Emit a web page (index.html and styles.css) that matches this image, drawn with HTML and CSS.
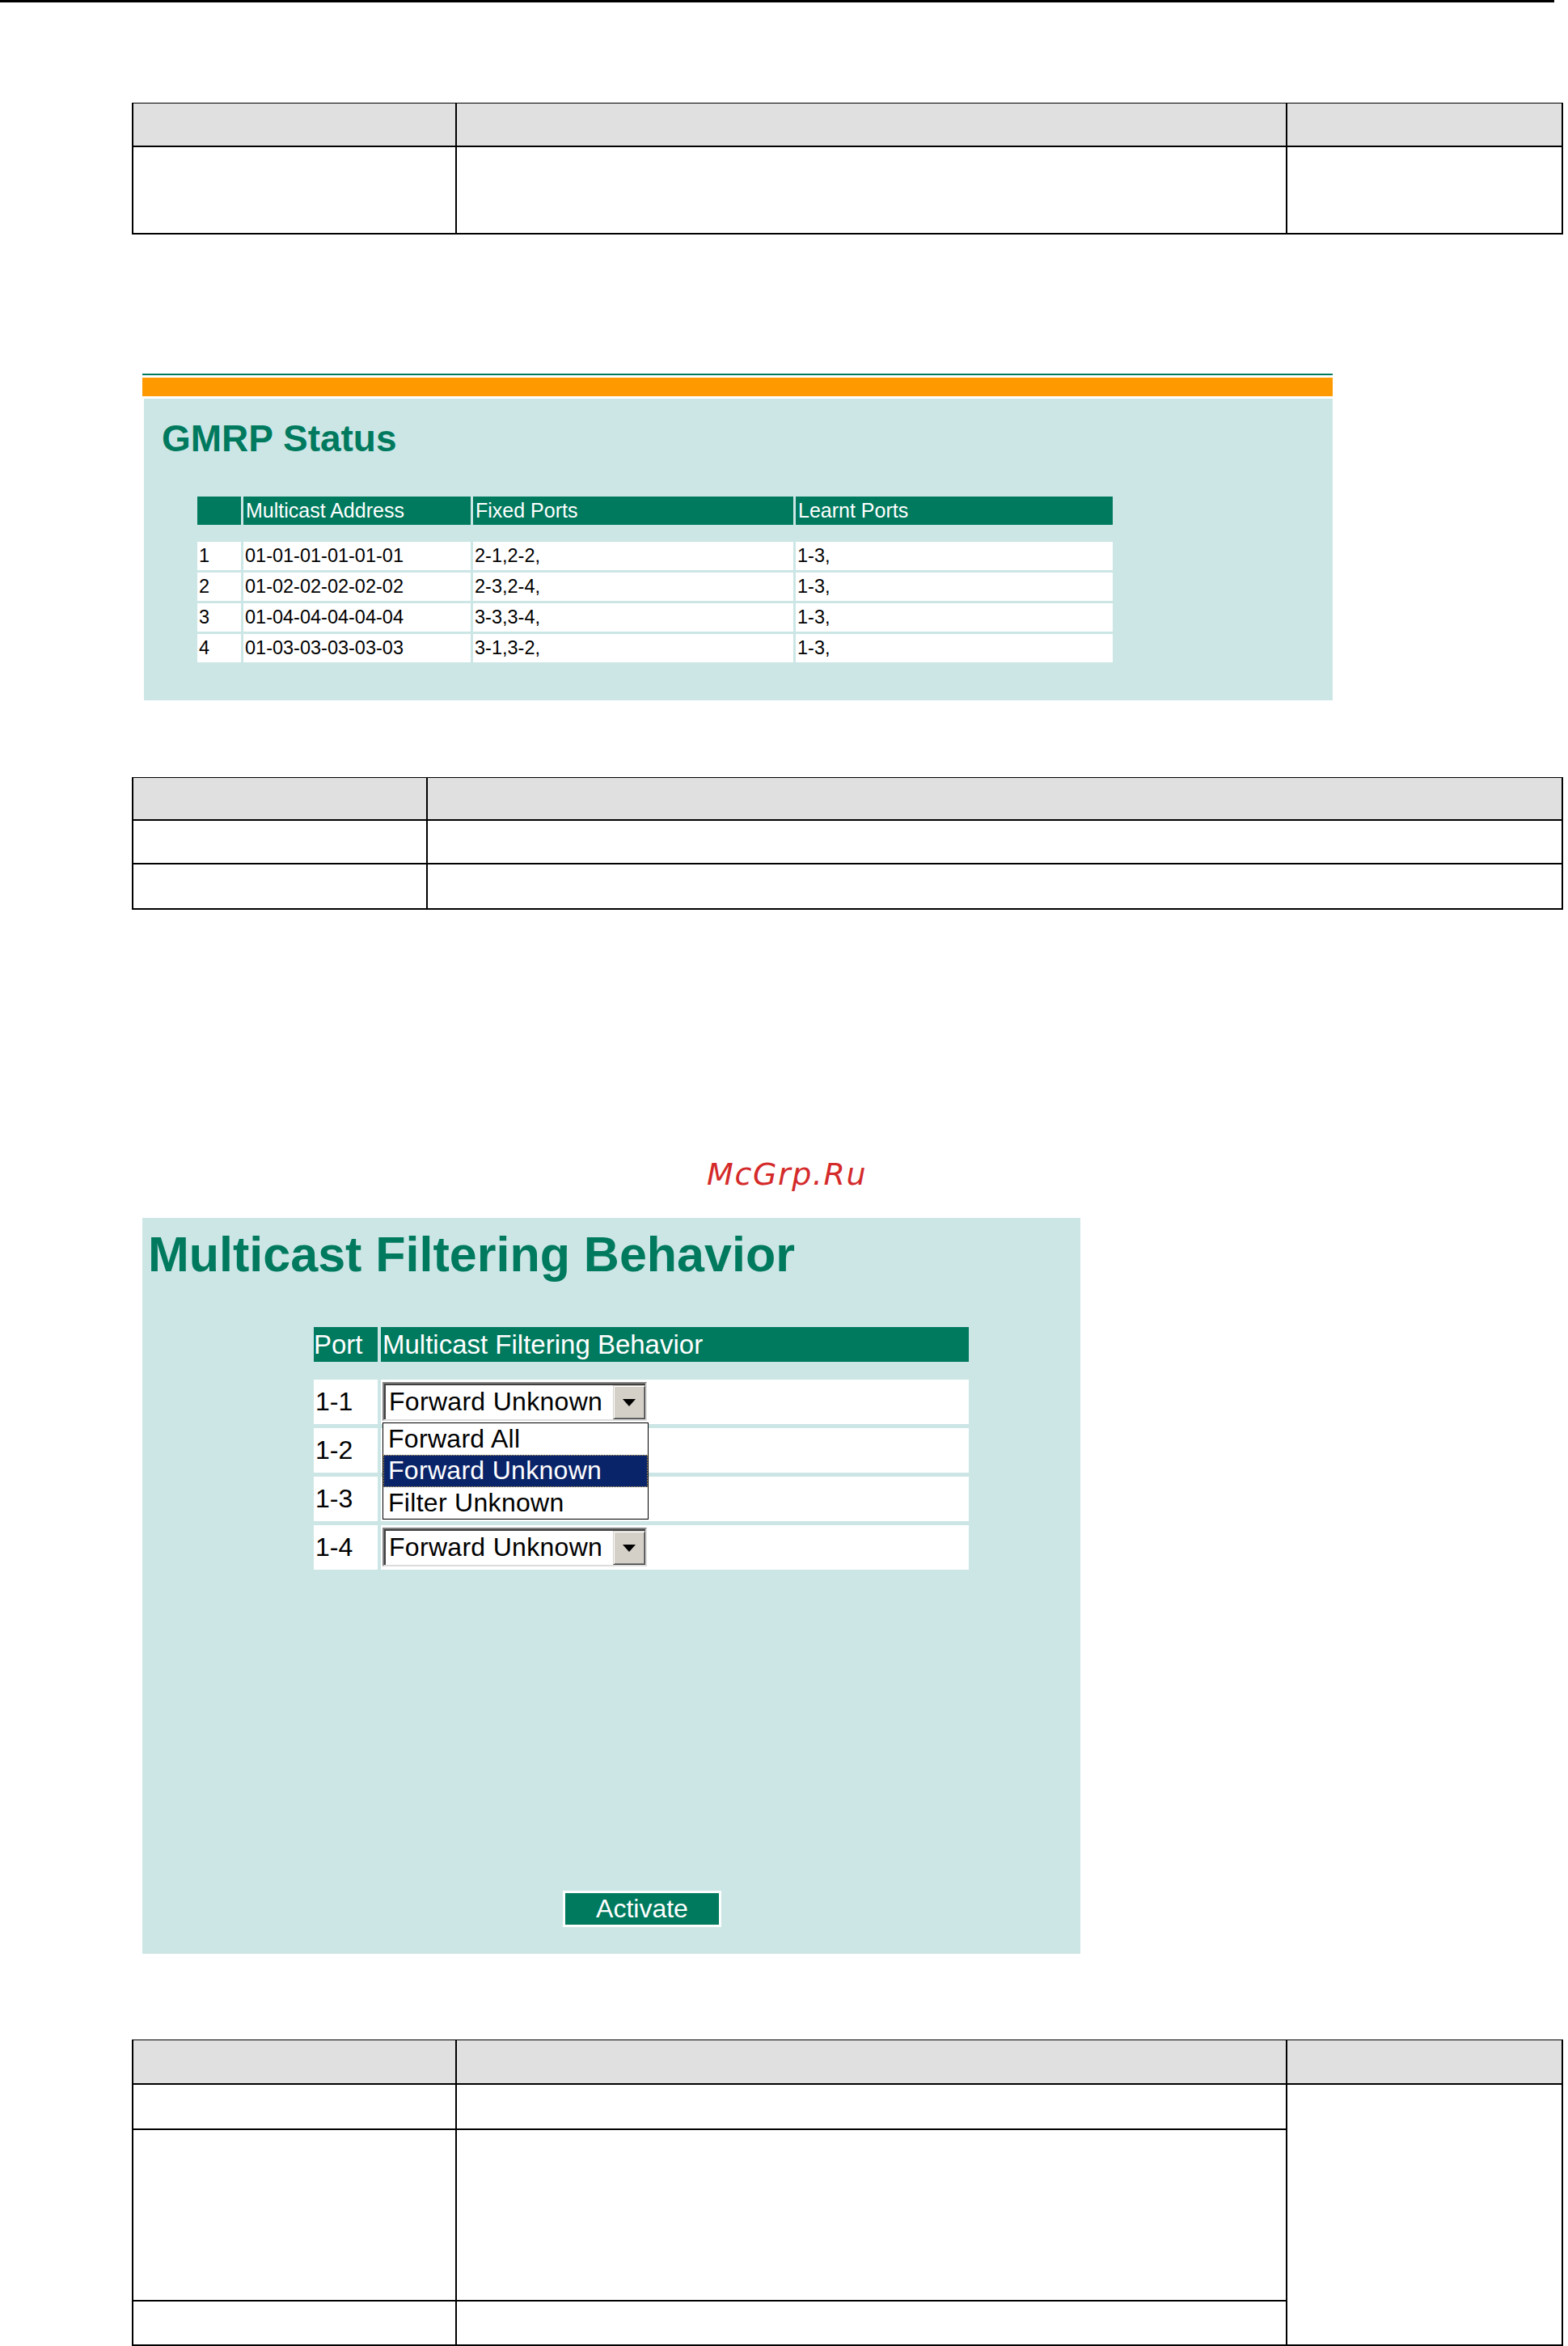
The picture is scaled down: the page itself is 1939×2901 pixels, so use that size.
FILE: index.html
```html
<!DOCTYPE html>
<html lang="en">
<head>
<meta charset="utf-8">
<title>GMRP Status / Multicast Filtering Behavior</title>
<link rel="stylesheet" href="styles.css">
</head>
<body>
<div class="page">
  <div class="top-rule"></div>

  <div class="doc-table t1">
    <div class="cell head"></div>
    <div class="cell head"></div>
    <div class="cell head last"></div>
    <div class="cell body-a"></div>
    <div class="cell body-a"></div>
    <div class="cell body-a last"></div>
  </div>

  <section class="gmrp">
    <div class="gmrp-line"></div>
    <div class="gmrp-orange"></div>
    <div class="gmrp-panel">
      <h1 class="gmrp-title">GMRP Status</h1>
      <div class="gtable">
        <div class="gh"></div>
        <div class="gh">Multicast Address</div>
        <div class="gh">Fixed Ports</div>
        <div class="gh">Learnt Ports</div>
        <div class="gspacer"></div>
        <div class="gd">1</div><div class="gd">01-01-01-01-01-01</div><div class="gd">2-1,2-2,</div><div class="gd">1-3,</div>
        <div class="gd">2</div><div class="gd">01-02-02-02-02-02</div><div class="gd">2-3,2-4,</div><div class="gd">1-3,</div>
        <div class="gd">3</div><div class="gd">01-04-04-04-04-04</div><div class="gd">3-3,3-4,</div><div class="gd">1-3,</div>
        <div class="gd">4</div><div class="gd">01-03-03-03-03-03</div><div class="gd">3-1,3-2,</div><div class="gd">1-3,</div>
      </div>
    </div>
  </section>

  <div class="doc-table t2">
    <div class="cell head"></div>
    <div class="cell head last"></div>
    <div class="cell r1 sep"></div>
    <div class="cell r1 sep last"></div>
    <div class="cell r2"></div>
    <div class="cell r2 last"></div>
  </div>

  <div class="watermark">McGrp.Ru</div>

  <section class="mfb-panel">
    <h1 class="mfb-title">Multicast Filtering Behavior</h1>
    <div class="mtable">
      <div class="mh port">Port</div>
      <div class="mh">Multicast Filtering Behavior</div>
      <div class="mspacer"></div>

      <div class="md port">1-1</div>
      <div class="md sel-cell">
        <div class="select"><span class="select-text">Forward Unknown</span><span class="select-btn"><span class="arrow"></span></span></div>
        <div class="dropdown">
          <div class="opt">Forward All</div>
          <div class="opt selected">Forward Unknown</div>
          <div class="opt">Filter Unknown</div>
        </div>
      </div>

      <div class="md port">1-2</div>
      <div class="md sel-cell"></div>

      <div class="md port">1-3</div>
      <div class="md sel-cell"></div>

      <div class="md port">1-4</div>
      <div class="md sel-cell">
        <div class="select"><span class="select-text">Forward Unknown</span><span class="select-btn"><span class="arrow"></span></span></div>
      </div>
    </div>
    <div class="activate">Activate</div>
  </section>

  <div class="doc-table t3">
    <div class="cell head"></div>
    <div class="cell head"></div>
    <div class="cell head last"></div>
    <div class="cell t3r1 sep"></div>
    <div class="cell t3r1 sep"></div>
    <div class="cell span3 last"></div>
    <div class="cell t3r2 sep"></div>
    <div class="cell t3r2 sep"></div>
    <div class="cell t3r3"></div>
    <div class="cell t3r3"></div>
  </div>
</div>
</body>
</html>
```

FILE: styles.css
```css
html, body {
  margin: 0;
  padding: 0;
  background: #ffffff;
}

.page {
  width: 1939px;
  font-family: "Liberation Sans", Arial, sans-serif;
  color: #000;
}

.top-rule {
  width: 1922px;
  height: 3px;
  background: #000;
}

/* ---------- document tables ---------- */
.doc-table {
  display: grid;
  box-sizing: border-box;
  width: 1770px;
  margin-left: 163px;
  border-top: 1px solid #000;
  border-left: 2px solid #000;
  border-right: 2px solid #000;
  border-bottom: 2px solid #000;
  background: #fff;
}

.cell {
  box-sizing: border-box;
  border-right: 2px solid #000;
}
.cell.last { border-right: none; }
.cell.head {
  background: #e0e0e0;
  border-bottom: 2px solid #000;
}
.cell.sep { border-bottom: 2px solid #000; }

.t1 {
  margin-top: 124px;
  grid-template-columns: 400px 1027px 339px;
  grid-template-rows: 54px 106px;
}

.t2 {
  margin-top: 95px;
  grid-template-columns: 364px 1402px;
  grid-template-rows: 53px 54px 54px;
}

.t3 {
  margin-top: 106px;
  grid-template-columns: 400px 1027px 339px;
  grid-template-rows: 55px 56px 212px 53px;
}
.t3 .span3 {
  grid-column: 3;
  grid-row: 2 / span 3;
}

/* ---------- GMRP status panel ---------- */
.gmrp {
  margin-top: 172px;
  margin-left: 176px;
  width: 1472px;
}
.gmrp-line {
  height: 2px;
  background: #007a5e;
}
.gmrp-orange {
  margin-top: 3px;
  height: 23px;
  background: #ff9900;
}
.gmrp-panel {
  box-sizing: border-box;
  margin-top: 3px;
  margin-left: 2px;
  height: 373px;
  padding: 26px 0 0 22px;
  background: #cce6e6;
}
.gmrp-title {
  margin: 0;
  font-size: 46px;
  line-height: 46px;
  font-weight: bold;
  color: #007a5e;
}
.gtable {
  display: grid;
  grid-template-columns: 54px 281px 396px 392px;
  grid-template-rows: 35px 15px;
  grid-auto-rows: 35px;
  column-gap: 3px;
  row-gap: 3px;
  margin-top: 49px;
  margin-left: 44px;
  width: 1132px;
}
.gh {
  background: #007a5e;
  color: #fff;
  font-size: 25px;
  line-height: 35px;
  padding-left: 3px;
  white-space: nowrap;
}
.gspacer {
  grid-column: 1 / -1;
  grid-row: 2;
}
.gd {
  background: #fff;
  font-size: 23.5px;
  line-height: 35px;
  padding-left: 2px;
  white-space: nowrap;
}

/* ---------- watermark ---------- */
.watermark {
  margin-top: 308px;
  padding-left: 874px;
  height: 38px;
  font-family: "DejaVu Sans", Verdana, sans-serif;
  font-style: italic;
  font-size: 38px;
  line-height: 38px;
  letter-spacing: 1.6px;
  color: #d42a2a;
}

/* ---------- Multicast filtering behavior panel ---------- */
.mfb-panel {
  box-sizing: border-box;
  margin-top: 35px;
  margin-left: 176px;
  width: 1160px;
  height: 910px;
  padding-top: 14px;
  background: #cce6e6;
}
.mfb-title {
  margin: 0;
  padding-left: 7px;
  font-size: 61px;
  line-height: 62px;
  font-weight: bold;
  color: #007a5e;
  white-space: nowrap;
}
.mtable {
  display: grid;
  grid-template-columns: 79px 727px;
  grid-template-rows: 43px 12px 55px 55px 55px 55px;
  column-gap: 4px;
  row-gap: 5px;
  margin-top: 59px;
  margin-left: 212px;
  width: 810px;
}
.mh {
  background: #007a5e;
  color: #fff;
  font-size: 33px;
  line-height: 43px;
  padding-left: 2px;
  white-space: nowrap;
}
.mh.port { padding-left: 0; }
.mspacer { grid-column: 1 / -1; }
.md {
  background: #fff;
  font-size: 32px;
  line-height: 55px;
  white-space: nowrap;
}
.md.port { padding-left: 2px; }
.sel-cell {
  position: relative;
}

.select {
  box-sizing: border-box;
  display: flex;
  width: 327px;
  height: 48px;
  margin: 3px 0 0 2px;
  border: 2px solid;
  border-color: #808080 #dcdcdc #dcdcdc #808080;
  box-shadow: inset 2px 2px 0 #404040;
  background: #fff;
}
.select-text {
  flex: 1;
  padding: 2px 0 0 6px;
  font-size: 32px;
  letter-spacing: 0.3px;
  line-height: 40px;
  color: #000;
  white-space: nowrap;
  overflow: hidden;
}
.select-btn {
  box-sizing: border-box;
  flex: none;
  width: 40px;
  height: 42px;
  margin-top: 2px;
  display: flex;
  align-items: center;
  justify-content: center;
  background: #d4d0c8;
  border: 1px solid;
  border-color: #d4d0c8 #404040 #404040 #d4d0c8;
  box-shadow: inset 1px 1px 0 #ffffff, inset -1px -1px 0 #808080;
}
.arrow {
  width: 0;
  height: 0;
  border-left: 8px solid transparent;
  border-right: 8px solid transparent;
  border-top: 9px solid #000;
}

.dropdown {
  position: absolute;
  z-index: 5;
  top: 53px;
  left: 2px;
  box-sizing: border-box;
  width: 329px;
  height: 120px;
  border: 1px solid #000;
  background: #fff;
}
.opt {
  box-sizing: border-box;
  height: 39px;
  padding-left: 6px;
  font-size: 32px;
  letter-spacing: 0.3px;
  line-height: 38px;
  color: #000;
  white-space: nowrap;
}
.opt.selected {
  background: #0a246a;
  color: #fff;
  border: 1px dotted #e8c468;
  padding-left: 5px;
  line-height: 36px;
  height: 40px;
}

.activate {
  box-sizing: border-box;
  width: 196px;
  height: 45px;
  margin-top: 397px;
  margin-left: 520px;
  border: 3px solid #fbfdfd;
  background: #007a5e;
  color: #fff;
  font-size: 32px;
  line-height: 39px;
  text-align: center;
}
```
